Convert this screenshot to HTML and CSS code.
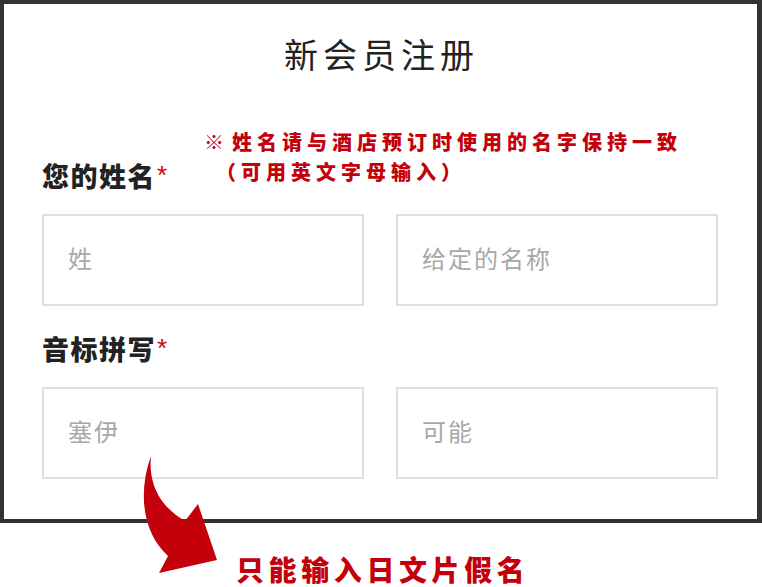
FILE: index.html
```html
<!DOCTYPE html>
<html lang="zh-CN">
<head>
<meta charset="utf-8">
<title>新会员注册</title>
<link rel="stylesheet" href="styles.css">
</head>
<body>
<div class="page">
  <div class="frame">
    <h1 class="title">新会员注册</h1>
    <div class="note">
      <div class="note-line">※<span class="gap"></span>姓名请与酒店预订时使用的名字保持一致</div>
      <div class="note-line note-indent">（可用英文字母输入）</div>
    </div>
    <div class="label">您的姓名<span class="req">*</span></div>
    <div class="row">
      <input class="field" type="text" placeholder="姓">
      <input class="field" type="text" placeholder="给定的名称">
    </div>
    <div class="label label-second">音标拼写<span class="req">*</span></div>
    <div class="row">
      <input class="field" type="text" placeholder="塞伊">
      <input class="field" type="text" placeholder="可能">
    </div>
  </div>
  <div class="hint">只能输入日文片假名</div>
  <svg class="arrow" viewBox="0 0 762 587" width="762" height="587" aria-hidden="true">
    <path d="M151,456 C138,492 142,532 168,556 L159,573 L217,560 L198,504 L185,521 C163,508 148,488 151,456 Z" fill="#c4000a"/>
  </svg>
</div>
</body>
</html>
```

FILE: styles.css
```css
html, body {
  margin: 0;
  padding: 0;
  width: 762px;
  height: 587px;
  overflow: hidden;
  background: #fff;
}

.page {
  position: relative;
  width: 762px;
  height: 587px;
  font-family: "Noto Sans CJK SC", "Noto Sans", sans-serif;
}

.frame {
  position: relative;
  box-sizing: border-box;
  width: 762px;
  height: 523px;
  border: 4px solid #333;
  border-right-width: 5px;
  padding: 29px 39px 0 38px;
}

.title {
  margin: 0;
  text-align: center;
  font-size: 34px;
  line-height: 42px;
  font-weight: 400;
  letter-spacing: 5px;
  color: #222;
  padding-left: 3px;
}

.note {
  position: absolute;
  left: 200px;
  top: 123px;
  color: #c4000a;
  font-size: 20px;
  line-height: 30px;
  font-weight: 900;
  letter-spacing: 5px;
}

.gap {
  display: inline-block;
  width: 3px;
}

.note-indent {
  padding-left: 12px;
}

.label {
  margin-top: 85px;
  font-size: 27px;
  line-height: 30px;
  font-weight: 900;
  color: #222;
  letter-spacing: 1.5px;
}

.label-second {
  margin-top: 27px;
}

.req {
  color: #d0000e;
  font-family: "Liberation Sans", sans-serif;
  font-size: 26px;
  font-weight: 400;
  vertical-align: 3px;
  margin-left: 1px;
}

.row {
  display: flex;
  gap: 32px;
  margin-top: 23px;
}

.field {
  box-sizing: border-box;
  width: 322px;
  height: 92px;
  margin: 0;
  border: 2px solid #e0e0e0;
  border-radius: 0;
  padding: 0 0 5px 24px;
  font-family: "Noto Sans CJK SC", "Noto Sans", sans-serif;
  font-size: 24px;
  letter-spacing: 2px;
  color: #333;
  background: #fff;
  outline: none;
}

.field::placeholder {
  color: #a8a8a8;
}

.hint {
  margin: 32px 0 0 236px;
  color: #c4000a;
  font-size: 28px;
  line-height: 28px;
  font-weight: 900;
  letter-spacing: 4.6px;
  white-space: nowrap;
}

.arrow {
  position: absolute;
  left: 0;
  top: 0;
  pointer-events: none;
}
```
